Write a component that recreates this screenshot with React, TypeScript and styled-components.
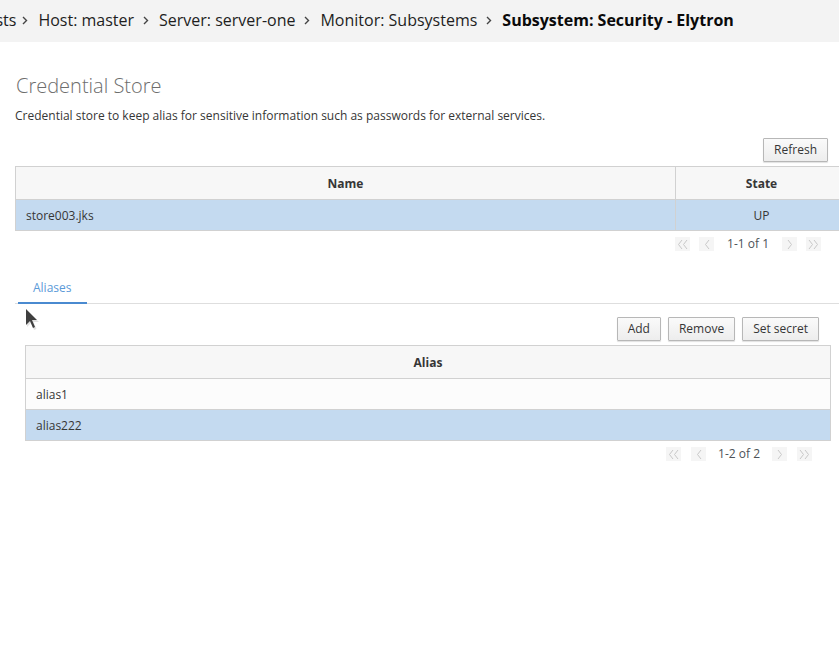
import React from 'react';
import styled, { createGlobalStyle } from 'styled-components';

const GlobalStyle = createGlobalStyle`
  html, body {
    margin: 0;
    padding: 0;
    background: #fff;
    overflow: hidden;
  }
  body {
    font-family: 'Open Sans', 'Liberation Sans', sans-serif;
    color: #363636;
  }
  * {
    box-sizing: border-box;
  }
`;

const Page = styled.div`
  position: relative;
  width: 839px;
  height: 653px;
  overflow: hidden;
`;

const Breadcrumb = styled.nav`
  display: flex;
  align-items: center;
  height: 42px;
  padding-bottom: 3px;
  background: #f3f3f3;
  font-size: 16px;
  white-space: nowrap;
  color: #1e1e1e;
`;

const Crumb = styled.span<{ $current?: boolean; $offset?: number }>`
  font-weight: ${({ $current }) => ($current ? 700 : 400)};
  color: ${({ $current }) => ($current ? '#0a0a0a' : '#1e1e1e')};
  margin-left: ${({ $offset }) => ($offset ? `${$offset}px` : '0')};
`;

const Separator = styled.svg<{ $lead: number }>`
  width: 6px;
  height: 9px;
  margin: 2px 10px 0 ${({ $lead }) => $lead}px;
  flex-shrink: 0;
`;

const Content = styled.main`
  width: 848px;
  padding-left: 15px;
`;

const Title = styled.h1`
  margin: 32px 0 0 1px;
  font-size: 20px;
  line-height: 24px;
  font-weight: 300;
  color: #6d6d6d;
`;

const Description = styled.p`
  margin: 9px 0 0;
  font-size: 12px;
  line-height: 18px;
  color: #363636;
`;

const Toolbar = styled.div<{ $top: number; $right: number }>`
  display: flex;
  justify-content: flex-end;
  gap: 7px;
  margin-top: ${({ $top }) => $top}px;
  padding-right: ${({ $right }) => $right}px;
`;

const Button = styled.button`
  height: 24px;
  padding: 0 10px;
  border: 1px solid #b7b7b7;
  border-radius: 1px;
  background: linear-gradient(to bottom, #fafafa 0%, #ededed 100%);
  box-shadow: 0 1px 1px rgba(0, 0, 0, 0.12);
  font-family: 'Open Sans', 'Liberation Sans', sans-serif;
  font-size: 12px;
  color: #363636;
  line-height: 20px;
`;

const Table = styled.table`
  width: 100%;
  margin-top: 4px;
  border-collapse: collapse;
  font-size: 12px;
  table-layout: fixed;
`;

const HeadCell = styled.th`
  height: 33px;
  padding: 0 10px;
  border: 1px solid #d1d1d1;
  background: #f7f7f7;
  font-weight: 700;
  color: #363636;
  text-align: center;
`;

const Row = styled.tr<{ $selected?: boolean }>`
  background: ${({ $selected }) => ($selected ? '#c4daf0' : '#fcfcfc')};
`;

const Cell = styled.td<{ $center?: boolean }>`
  height: 31px;
  padding: 0 10px;
  border: 1px solid #d1d1d1;
  color: #363636;
  text-align: ${({ $center }) => ($center ? 'center' : 'left')};
`;

const Pager = styled.div<{ $right: number; $gap: number }>`
  display: flex;
  justify-content: flex-end;
  align-items: center;
  gap: ${({ $gap }) => $gap}px;
  margin-top: 6px;
  padding-right: ${({ $right }) => $right}px;
  font-size: 12px;
  color: #4d5258;
`;

const PagerButton = styled.span`
  display: flex;
  align-items: center;
  justify-content: center;
  width: 15px;
  height: 14px;
  background: #f5f5f5;
`;

const PagerLabel = styled.span<{ $space: number }>`
  margin: 0 ${({ $space }) => $space}px;
  line-height: 14px;
`;

const Tabs = styled.section`
  margin-top: 23px;
`;

const TabList = styled.div`
  display: flex;
  border-bottom: 1px solid #dedede;
  padding-left: 3px;
`;

const Tab = styled.span<{ $active?: boolean }>`
  padding: 6px 15px;
  margin-bottom: -1px;
  font-size: 12px;
  line-height: 16px;
  color: ${({ $active }) => ($active ? '#5b9ad8' : '#363636')};
  border-bottom: 2px solid ${({ $active }) => ($active ? '#4a8ad0' : 'transparent')};
`;

const TabPane = styled.div`
  padding: 0 17px 0 10px;
`;

const Cursor = styled.svg`
  position: absolute;
  left: 25px;
  top: 309px;
  width: 14px;
  height: 22px;
`;

const Chevron = ({ double, left }: { double?: boolean; left?: boolean }) => {
  const d = left ? 'M5 1 L1.5 5.5 L5 10' : 'M1 1 L4.5 5.5 L1 10';
  return (
    <svg width={double ? 11 : 6} height="11" viewBox={double ? '0 0 11 11' : '0 0 6 11'}>
      <path d={d} fill="none" stroke="#c8c8c8" strokeWidth="1" />
      {double && (
        <path d={d} transform="translate(5 0)" fill="none" stroke="#c8c8c8" strokeWidth="1" />
      )}
    </svg>
  );
};

const PagerBar = ({ label, right, gap, space }: { label: string; right: number; gap: number; space: number }) => (
  <Pager $right={right} $gap={gap}>
    <PagerButton>
      <Chevron double left />
    </PagerButton>
    <PagerButton>
      <Chevron left />
    </PagerButton>
    <PagerLabel $space={space}>{label}</PagerLabel>
    <PagerButton>
      <Chevron />
    </PagerButton>
    <PagerButton>
      <Chevron double />
    </PagerButton>
  </Pager>
);

const Sep = ({ lead = 9 }: { lead?: number }) => (
  <Separator $lead={lead} viewBox="0 0 6 9">
    <path d="M1 1 L4.5 4.5 L1 8" fill="none" stroke="#444" strokeWidth="1.4" />
  </Separator>
);

const crumbs = ['Host: master', 'Server: server-one', 'Monitor: Subsystems'];

const App: React.FC = (): JSX.Element => {
  return (
    <Page>
      <GlobalStyle />
      <Breadcrumb>
        <Crumb $offset={-26}>Hosts</Crumb>
        {crumbs.map((c, i) => (
          <React.Fragment key={c}>
            <Sep lead={i === 0 ? 6 : 9} />
            <Crumb>{c}</Crumb>
          </React.Fragment>
        ))}
        <Sep />
        <Crumb $current>Subsystem: Security - Elytron</Crumb>
      </Breadcrumb>

      <Content>
        <Title>Credential Store</Title>
        <Description>
          Credential store to keep alias for sensitive information such as passwords for external services.
        </Description>

        <Toolbar $top={13} $right={20}>
          <Button>Refresh</Button>
        </Toolbar>
        <Table>
          <colgroup>
            <col style={{ width: '660px' }} />
            <col />
          </colgroup>
          <thead>
            <tr>
              <HeadCell>Name</HeadCell>
              <HeadCell>State</HeadCell>
            </tr>
          </thead>
          <tbody>
            <Row $selected>
              <Cell>store003.jks</Cell>
              <Cell $center>UP</Cell>
            </Row>
          </tbody>
        </Table>
        <PagerBar label="1-1 of 1" right={27} gap={9} space={4} />

        <Tabs>
          <TabList>
            <Tab $active>Aliases</Tab>
          </TabList>
          <TabPane>
            <Toolbar $top={13} $right={12}>
              <Button>Add</Button>
              <Button>Remove</Button>
              <Button>Set secret</Button>
            </Toolbar>
            <Table>
              <thead>
                <tr>
                  <HeadCell>Alias</HeadCell>
                </tr>
              </thead>
              <tbody>
                <Row>
                  <Cell>alias1</Cell>
                </Row>
                <Row $selected>
                  <Cell>alias222</Cell>
                </Row>
              </tbody>
            </Table>
            <PagerBar label="1-2 of 2" right={19} gap={10} space={2} />
          </TabPane>
        </Tabs>
      </Content>

      <Cursor viewBox="0 0 14 22">
        <path d="M2 2 L2 18 L6 14 L9 21 L11.5 20 L8.5 13 L14 13 Z" fill="#cfcfcf" opacity="0.6" />
        <path d="M1 0 L1 16 L5 12 L8 19 L10 18 L7 11 L12 11 Z" fill="#3f3f3f" />
      </Cursor>
    </Page>
  );
};

export default App;
